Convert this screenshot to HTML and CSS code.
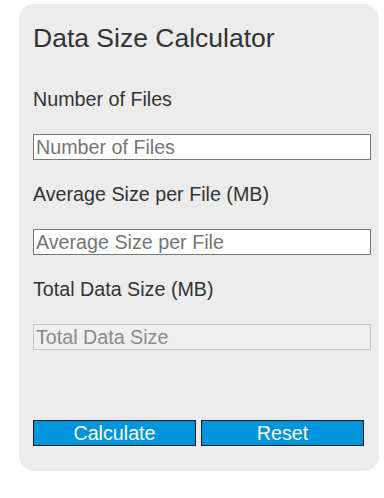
FILE: index.html
```html
<!DOCTYPE html>
<html>
<head>
<meta charset="utf-8">
<link rel="stylesheet" href="styles.css">
</head>
<body>
<div class="page">
  <div class="card">
    <h2 class="title">Data Size Calculator</h2>
    <label class="label" for="files">Number of Files</label>
    <input class="field" id="files" type="text" placeholder="Number of Files">
    <label class="label" for="avg">Average Size per File (MB)</label>
    <input class="field" id="avg" type="text" placeholder="Average Size per File">
    <label class="label" for="total">Total Data Size (MB)</label>
    <input class="field field-disabled" id="total" type="text" placeholder="Total Data Size" disabled>
    <div class="actions">
      <button class="btn" type="button">Calculate</button>
      <button class="btn" type="button">Reset</button>
    </div>
  </div>
</div>
</body>
</html>
```

FILE: styles.css
```css
html, body {
  margin: 0;
  padding: 0;
  background: #ffffff;
}

.page {
  padding: 4px 0 0 19px;
  font-family: "Liberation Sans", Arial, sans-serif;
}

.card {
  width: 360px;
  box-sizing: border-box;
  background: #ececec;
  border-radius: 15px;
  padding: 19px 14px 25px 14px;
  display: flex;
  flex-direction: column;
  align-items: flex-start;
}

.title {
  margin: 0 0 35px 0;
  font-size: 26.5px;
  line-height: 30px;
  font-weight: normal;
  color: #333333;
}

.label {
  display: block;
  font-size: 19.7px;
  line-height: 22px;
  color: #333333;
  margin-bottom: 24px;
}

.field {
  width: 338px;
  height: 26px;
  box-sizing: border-box;
  margin: 0 0 23px 0;
  padding: 1px 2px;
  border: 1px solid #767676;
  background: #ffffff;
  font-family: "Liberation Sans", Arial, sans-serif;
  font-size: 19.7px;
  line-height: 22px;
  color: #333333;
  outline: none;
  border-radius: 0;
}

.field::placeholder {
  color: #757575;
  opacity: 1;
}

.field-disabled {
  background: #efefef;
  border-color: #c6c6c6;
  margin-bottom: 70px;
}

.field-disabled::placeholder {
  color: #8a8a8a;
}

.actions {
  display: flex;
  gap: 5px;
}

.btn {
  width: 163px;
  height: 26px;
  box-sizing: border-box;
  margin: 0;
  padding: 0;
  border: 1px solid #1b1b1b;
  border-radius: 0;
  background: #0095dd;
  color: #ffffff;
  font-family: "Liberation Sans", Arial, sans-serif;
  font-size: 19.7px;
  line-height: 22px;
  cursor: pointer;
}
```
